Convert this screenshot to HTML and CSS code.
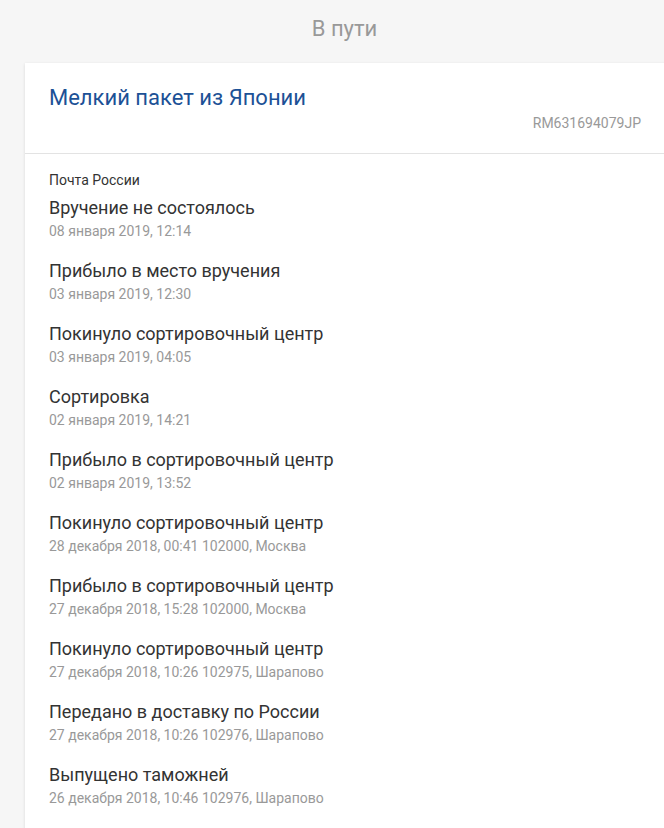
FILE: index.html
```html
<!DOCTYPE html>
<html lang="ru">
<head>
    <meta charset="UTF-8">
    <title>В пути</title>
    <link rel="stylesheet" href="styles.css">
</head>
<body>
    <header class="status">В пути</header>
    <div class="card">
        <div class="card-head">
            <h1 class="parcel-name">Мелкий пакет из Японии</h1>
            <div class="track-number">RM631694079JP</div>
        </div>
        <div class="card-body">
            <div class="carrier">Почта России</div>
            <ul class="events">
                <li class="event">
                    <div class="event-title">Вручение не состоялось</div>
                    <div class="event-meta">08 января 2019, 12:14</div>
                </li>
                <li class="event">
                    <div class="event-title">Прибыло в место вручения</div>
                    <div class="event-meta">03 января 2019, 12:30</div>
                </li>
                <li class="event">
                    <div class="event-title">Покинуло сортировочный центр</div>
                    <div class="event-meta">03 января 2019, 04:05</div>
                </li>
                <li class="event">
                    <div class="event-title">Сортировка</div>
                    <div class="event-meta">02 января 2019, 14:21</div>
                </li>
                <li class="event">
                    <div class="event-title">Прибыло в сортировочный центр</div>
                    <div class="event-meta">02 января 2019, 13:52</div>
                </li>
                <li class="event">
                    <div class="event-title">Покинуло сортировочный центр</div>
                    <div class="event-meta">28 декабря 2018, 00:41 102000, Москва</div>
                </li>
                <li class="event">
                    <div class="event-title">Прибыло в сортировочный центр</div>
                    <div class="event-meta">27 декабря 2018, 15:28 102000, Москва</div>
                </li>
                <li class="event">
                    <div class="event-title">Покинуло сортировочный центр</div>
                    <div class="event-meta">27 декабря 2018, 10:26 102975, Шарапово</div>
                </li>
                <li class="event">
                    <div class="event-title">Передано в доставку по России</div>
                    <div class="event-meta">27 декабря 2018, 10:26 102976, Шарапово</div>
                </li>
                <li class="event">
                    <div class="event-title">Выпущено таможней</div>
                    <div class="event-meta">26 декабря 2018, 10:46 102976, Шарапово</div>
                </li>
            </ul>
        </div>
    </div>
</body>
</html>
```

FILE: styles.css
```css
/* Basic Reset */
html,
body {
    margin: 0;
    padding: 0;
    height: 100%;
    overflow: hidden;
    background-color: #f6f6f6;
    font-family: Roboto, 'Noto Sans', sans-serif;
    color: #333333;
}

/* Status Header */
.status {
    height: 63px;
    line-height: 57px;
    padding-left: 25px; /* page is wider than the window, centre on the card */
    text-align: center;
    font-size: 22px;
    color: #999999;
}

/* Card */
.card {
    margin-left: 25px;
    margin-right: -20px;
    background: #ffffff;
    box-shadow: 0 1px 3px rgba(0, 0, 0, 0.12);
    min-height: 800px;
}

.card-head {
    padding: 22px 43px 22px 24px;
    border-bottom: 1px solid #e3e3e3;
}

.parcel-name {
    margin: 0;
    font-size: 22px;
    font-weight: 400;
    line-height: 26px;
    color: #1c5196;
}

.track-number {
    margin-top: 4px;
    text-align: right;
    font-size: 14px;
    line-height: 16px;
    color: #999999;
}

/* Timeline */
.card-body {
    padding: 18px 24px;
}

.carrier {
    font-size: 14px;
    line-height: 16px;
    color: #333333;
}

.events {
    list-style: none;
    margin: 0;
    padding: 0;
}

.event {
    height: 63px;
}

.event-title {
    padding-top: 9px;
    font-size: 18px;
    line-height: 22px;
    color: #333333;
}

.event-meta {
    margin-top: 3px;
    font-size: 14px;
    line-height: 18px;
    color: #999999;
}
```
